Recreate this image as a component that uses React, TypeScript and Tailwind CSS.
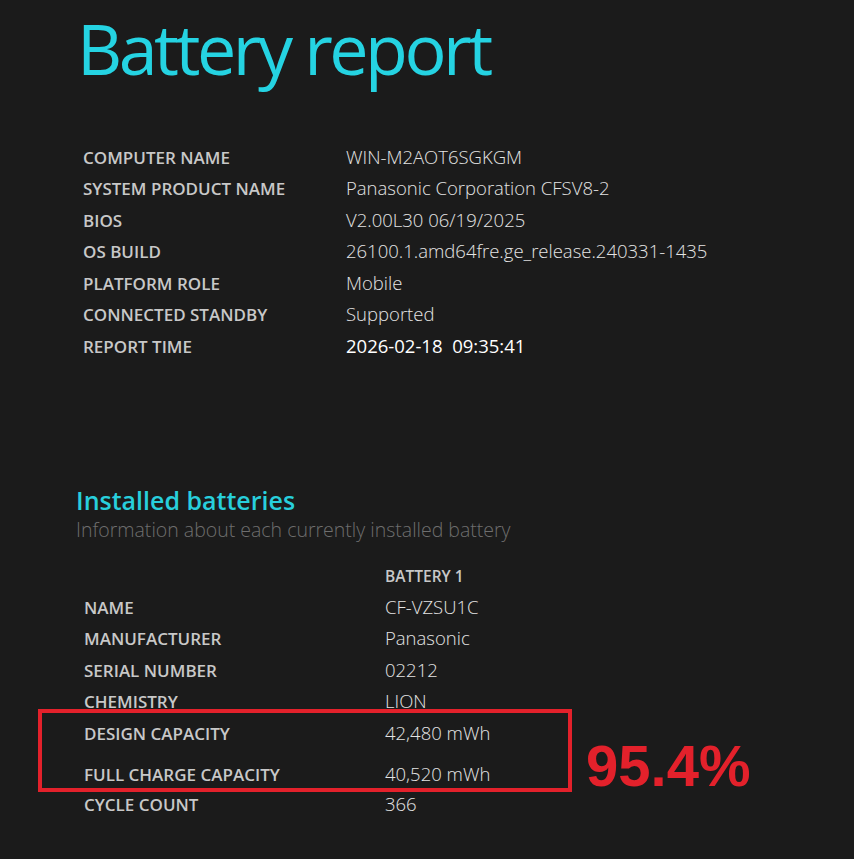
import React from "react";

const info: [string, string][] = [
  ["COMPUTER NAME", "WIN-M2AOT6SGKGM"],
  ["SYSTEM PRODUCT NAME", "Panasonic Corporation CFSV8-2"],
  ["BIOS", "V2.00L30 06/19/2025"],
  ["OS BUILD", "26100.1.amd64fre.ge_release.240331-1435"],
  ["PLATFORM ROLE", "Mobile"],
  ["CONNECTED STANDBY", "Supported"],
];

const battery: [string, string][] = [
  ["NAME", "CF-VZSU1C"],
  ["MANUFACTURER", "Panasonic"],
  ["SERIAL NUMBER", "02212"],
  ["CHEMISTRY", "LION"],
];

const font = { fontFamily: '"Open Sans", "Noto Sans", sans-serif' };

const Label = ({ children }: { children: React.ReactNode }) => (
  <div className="text-[17px] font-semibold text-[#c8c8c8] leading-none">{children}</div>
);

const Value = ({ children, strong }: { children: React.ReactNode; strong?: boolean }) => (
  <div className={`text-[18.5px] leading-none ${strong ? "text-white font-normal" : "text-[#e4e4e4] font-light"}`}>
    {children}
  </div>
);

export default function App() {
  return (
    <div className="w-[854px] h-[859px] bg-[#1b1b1b] overflow-hidden" style={font}>
      <h1 className="pl-[77px] pt-[6px] text-[70px] leading-[84px] font-normal text-[#25d3e2] tracking-[-3.5px]">
        Battery report
      </h1>

      {/* System info */}
      <div className="mt-[58px] pl-[83px] flex flex-col gap-[13.5px]">
        {info.map(([k, v]) => (
          <div key={k} className="flex items-center h-[18px]">
            <div className="w-[263px]"><Label>{k}</Label></div>
            <Value>{v}</Value>
          </div>
        ))}
        <div className="flex items-center h-[18px]">
          <div className="w-[263px]"><Label>REPORT TIME</Label></div>
          <Value strong>2026-02-18&nbsp;&nbsp;09:35:41</Value>
        </div>
      </div>

      {/* Installed batteries */}
      <div className="mt-[130px] pl-[76px]">
        <h2 className="text-[25px] leading-[30px] font-semibold text-[#28cfdc]">Installed batteries</h2>
        <p className="mt-[3px] text-[19.5px] leading-[24px] font-light text-[#6e6e6e]">
          Information about each currently installed battery
        </p>
      </div>

      <div className="mt-[26px] pl-[84px] flex flex-col">
        <div className="flex items-center h-[18px]">
          <div className="w-[301px]" />
          <div className="text-[15.5px] font-semibold text-[#c8c8c8] leading-none">BATTERY 1</div>
        </div>
        <div className="flex flex-col gap-[13.5px] mt-[12px]">
          {battery.map(([k, v]) => (
            <div key={k} className="flex items-center h-[18px]">
              <div className="w-[301px]"><Label>{k}</Label></div>
              <Value>{v}</Value>
            </div>
          ))}
        </div>

        {/* highlighted capacities */}
        <div className="flex items-start h-[83px] -mt-[2px]">
          <div className="-ml-[46px] w-[534px] h-[83px] border-4 border-[#e3212b] flex flex-col gap-[23px] pt-[12px] pl-[42px]">
            <div className="flex items-center h-[18px]">
              <div className="w-[301px]"><Label>DESIGN CAPACITY</Label></div>
              <Value>42,480 mWh</Value>
            </div>
            <div className="flex items-center h-[18px]">
              <div className="w-[301px]"><Label>FULL CHARGE CAPACITY</Label></div>
              <Value>40,520 mWh</Value>
            </div>
          </div>
          <div
            className="ml-[14px] mt-[28px] text-[58px] font-bold text-[#e3212b] leading-none"
            style={{ fontFamily: '"Liberation Sans", "Noto Sans", sans-serif' }}
          >
            95.4%
          </div>
        </div>

        <div className="flex items-center h-[18px] mt-[4px]">
          <div className="w-[301px]"><Label>CYCLE COUNT</Label></div>
          <Value>366</Value>
        </div>
      </div>
    </div>
  );
}
